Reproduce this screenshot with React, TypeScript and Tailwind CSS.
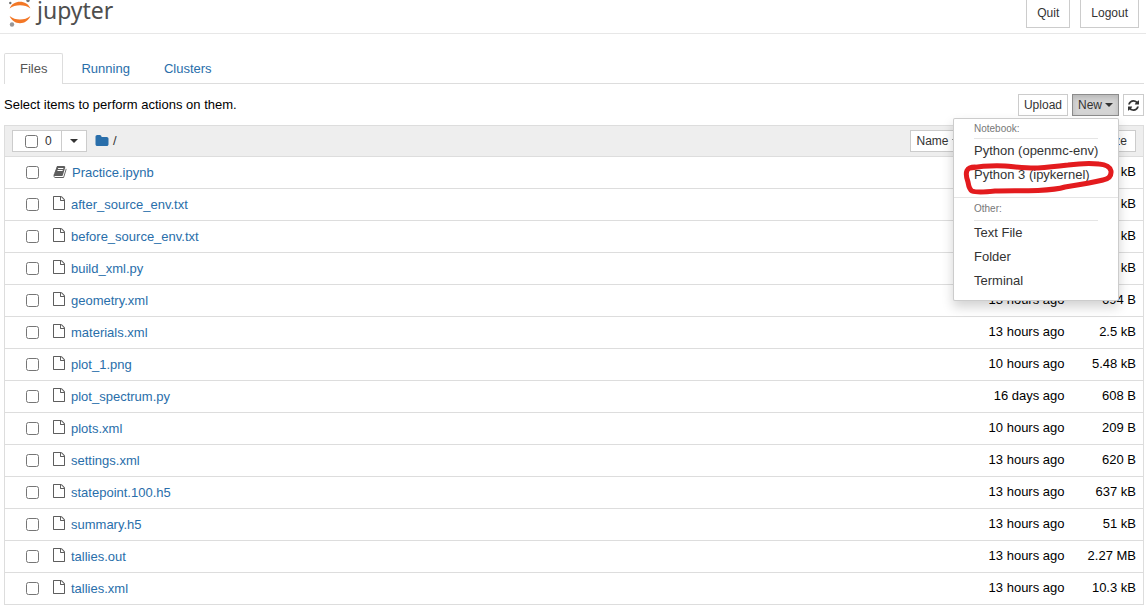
import React from "react";

type Entry = { name: string; modified: string; size: string; notebook?: boolean };

const entries: Entry[] = [
  { name: "Practice.ipynb", modified: "13 hours ago", size: "1.2 kB", notebook: true },
  { name: "after_source_env.txt", modified: "13 hours ago", size: "3.1 kB" },
  { name: "before_source_env.txt", modified: "13 hours ago", size: "3.1 kB" },
  { name: "build_xml.py", modified: "13 hours ago", size: "5.2 kB" },
  { name: "geometry.xml", modified: "13 hours ago", size: "694 B" },
  { name: "materials.xml", modified: "13 hours ago", size: "2.5 kB" },
  { name: "plot_1.png", modified: "10 hours ago", size: "5.48 kB" },
  { name: "plot_spectrum.py", modified: "16 days ago", size: "608 B" },
  { name: "plots.xml", modified: "10 hours ago", size: "209 B" },
  { name: "settings.xml", modified: "13 hours ago", size: "620 B" },
  { name: "statepoint.100.h5", modified: "13 hours ago", size: "637 kB" },
  { name: "summary.h5", modified: "13 hours ago", size: "51 kB" },
  { name: "tallies.out", modified: "13 hours ago", size: "2.27 MB" },
  { name: "tallies.xml", modified: "13 hours ago", size: "10.3 kB" },
];

const BOOK =
  "M1703 478q40 57 18 129l-275 906q-19 64-76.5 107.5t-122.5 43.5h-923q-77 0-148.5-53.5t-99.5-131.5q-24-67-2-127 0-4 3-27t4-37q1-8-3-21.5t-3-19.5q2-11 8-21t16.5-23.5 16.5-23.5q23-38 45-91.5t30-91.5q3-10 .5-30t-.5-28q3-11 17-28t17-23q21-36 42-92t25-90q1-9-2.5-32t.5-28q4-13 22-30.5t22-22.5q19-26 42.5-84.5t27.5-96.5q1-8-3-25.5t-2-26.5q2-8 9-18t18-23 17-21q8-12 16.5-30.5t15-35 16-36 19.5-32 26.5-23.5 36-11.5 47.5 5.5l-1 3q38-9 51-9h761q74 0 114 56t18 130l-274 906q-36 119-71.5 153.5t-128.5 34.5h-869q-27 0-38 15-11 16-1 43 24 70 144 70h923q29 0 56-15.5t35-41.5l300-987q7-22 5-57 38 15 59 43zm-1064 2q-4 13 2 22.5t20 9.5h608q13 0 25.5-9.5t16.5-22.5l21-64q4-13-2-22.5t-20-9.5h-608q-13 0-25.5 9.5t-16.5 22.5zm-83 256q-4 13 2 22.5t20 9.5h608q13 0 25.5-9.5t16.5-22.5l21-64q4-13-2-22.5t-20-9.5h-608q-13 0-25.5 9.5t-16.5 22.5z";
const FILE =
  "M1596 380q28 28 48 76t20 88v1152q0 40-28 68t-68 28h-1344q-40 0-68-28t-28-68v-1600q0-40 28-68t68-28h896q40 0 88 20t76 48zm-444-244v376h376q-10-29-22-41l-313-313q-12-12-41-22zm384 1528v-1024h-416q-40 0-68-28t-28-68v-416h-768v1536h1280z";
const FOLDER =
  "M1728 608v704q0 92-66 158t-158 66h-1216q-92 0-158-66t-66-158v-960q0-92 66-158t158-66h320q92 0 158 66t66 158v32h672q92 0 158 66t66 158z";
const REFRESH =
  "M1511 928q0 5-1 7-64 268-268 434.5t-478 166.5q-146 0-282.5-55t-243.5-157l-129 129q-19 19-45 19t-45-19-19-45v-448q0-26 19-45t45-19h448q26 0 45 19t19 45-19 45l-137 137q71 66 161 102t187 36q134 0 250-65t186-179q11-17 53-117 8-23 30-23h192q13 0 22.5 9.5t9.5 22.5zm25-800v448q0 26-19 45t-45 19h-448q-26 0-45-19t-19-45 19-45l138-138q-148-137-349-137-134 0-250 65t-186 179q-11 17-53 117-8 23-30 23h-199q-13 0-22.5-9.5t-9.5-22.5v-7q65-268 270-434.5t480-166.5q146 0 284 55.5t245 156.5l130-129q19-19 45-19t45 19 19 45z";

function Caret() {
  return <span className="inline-block border-x-4 border-t-4 border-x-transparent border-t-[#333]" />;
}

function Logo() {
  return (
    <a href="#" className="flex h-8 items-start text-[#4e4e4e]">
      <svg width="30" height="28" viewBox="0 0 30 28" aria-hidden="true">
        <path d="M5.600 8.500C7.500 3.800 11.500 1.700 16 1.700S24.500 3.800 26.400 8.500C23.500 6.200 20 5.200 16 5.200S8.500 6.200 5.600 8.500z" fill="#f37726" />
        <path d="M5.600 16C7.500 20.700 11.500 23.200 16 23.200S24.500 20.700 26.400 16C23.500 18.400 20 19.500 16 19.500S8.500 18.400 5.600 16z" fill="#f37726" />
        <circle cx="8" cy="24.500" r="2.200" fill="#989798" />
        <circle cx="6.300" cy="3" r="1.200" fill="#6f7070" />
        <circle cx="24" cy="0.500" r="1.700" fill="#767677" />
      </svg>
      <span className="-mt-2 pl-[3px] font-['Noto_Sans','Open_Sans',sans-serif] text-[23px] leading-9">jupyter</span>
    </a>
  );
}

const tool = "flex h-[22px] items-center border border-[#ccc] bg-white text-xs text-[#333]";

function MenuHeading({ children }: { children: React.ReactNode }) {
  return <div className="mx-5 border-b border-[#e5e5e5] text-[10px] text-[#777]">{children}</div>;
}

function MenuItem({ children }: { children: React.ReactNode }) {
  return (
    <a href="#" role="menuitem" className="flex h-6 items-center px-5 whitespace-nowrap text-[#333]">
      {children}
    </a>
  );
}

function NewMenu() {
  return (
    <div
      role="menu"
      className="absolute top-full right-0 z-10 mt-[2px] w-[166px] rounded-xs border border-black/20 bg-white pb-[7px] shadow-[0_6px_12px_rgba(0,0,0,0.18)]"
    >
      <MenuHeading>
        <div className="flex h-[19px] items-center">Notebook:</div>
      </MenuHeading>
      <MenuItem>Python (openmc-env)</MenuItem>
      <div className="relative">
        <MenuItem>Python 3 (ipykernel)</MenuItem>
        <svg className="absolute -top-2 left-2" width="154" height="42" viewBox="0 0 154 42" fill="none" aria-hidden="true">
          <path
            d="M8 13C20 11 32 10.500 43 11C55 12 66 13.500 76 13C88 12 97 11 106 10C117 8.500 129 8 137 9C144 9.500 148 12 149 16C149.500 21 147 24 141 25C129 28 116 30 103 32C95 34.500 86 35 76 35.500C60 36 45 35.500 33 36C24 37 14 37.500 10 36C7 34 6.500 30 6 27C4.500 23 3.500 19 5 15.500C6 13.500 9 12 13 12"
            stroke="#e31b1e"
            strokeWidth="5"
            strokeLinecap="round"
            strokeLinejoin="round"
          />
        </svg>
      </div>
      <hr className="mt-[10px] border-[#e5e5e5]" />
      <MenuHeading>
        <div className="flex h-[22px] items-center">Other:</div>
      </MenuHeading>
      <MenuItem>Text File</MenuItem>
      <MenuItem>Folder</MenuItem>
      <MenuItem>Terminal</MenuItem>
    </div>
  );
}

export default function App() {
  return (
    <div className="min-h-screen bg-white font-['Liberation_Sans',Arial,sans-serif] text-[13px] leading-5 text-black">
      <header className="flex h-[34px] items-start justify-between overflow-hidden border-b border-[#e7e7e7] pr-[7px] pl-1">
        <Logo />
        <div className="flex gap-[10px]">
          <button className="h-7 border border-t-0 border-[#ccc] px-[10px] pb-[2px] text-xs text-[#333]">Quit</button>
          <button className="h-7 border border-t-0 border-[#ccc] px-[10px] pb-[2px] text-xs text-[#333]">Logout</button>
        </div>
      </header>

      <main className="pt-[19px] pr-[2px] pl-1">
        <nav className="flex h-[31px] border-b border-[#ddd]">
          <a href="#" className="-mb-px flex items-center rounded-t-xs border border-b-0 border-[#ddd] bg-white px-[15px] text-[#555]">
            Files
          </a>
          <a href="#" className="ml-[2px] flex items-center px-4 pt-px text-[#296eaa]">Running</a>
          <a href="#" className="ml-[2px] flex items-center px-4 pt-px text-[#296eaa]">Clusters</a>
        </nav>

        <div className="flex items-center justify-between pt-[10px] pb-[9px]">
          <span>Select items to perform actions on them.</span>
          <div className="flex gap-1">
            <button className={tool + " px-[5px]"}>Upload</button>
            <div className="relative">
              <button className="flex h-[22px] items-center gap-[3px] border border-[#8c8c8c] bg-[#d4d4d4] px-[5px] text-xs text-[#333] shadow-[inset_0_3px_5px_rgba(0,0,0,0.125)]">
                New <Caret />
              </button>
              <NewMenu />
            </div>
            <button className={tool + " px-1"} aria-label="Refresh">
              <svg width="11" height="11" viewBox="0 0 1536 1536" fill="#333"><path d={REFRESH} /></svg>
            </button>
          </div>
        </div>

        <table className="w-full border-collapse border border-[#ddd]">
          <thead>
            <tr className="h-[31px] bg-[#eee] font-normal">
              <th className="py-0 pl-[7px] font-normal">
                <div className="flex items-center justify-between">
                  <div className="flex items-center">
                    <label className={tool + " w-[50px] gap-[7px] pl-3"}>
                      <input type="checkbox" className="size-[13px]" />0
                    </label>
                    <button className={tool + " -ml-px w-[26px] justify-center"} aria-label="Select by type">
                      <Caret />
                    </button>
                    <a href="#" className="ml-2 flex items-center gap-1 text-[#333]">
                      <svg width="14" height="14" viewBox="0 0 1792 1792" fill="#296eaa" aria-hidden="true"><path d={FOLDER} /></svg>
                      /
                    </a>
                  </div>
                  <button className={tool + " gap-[3px] px-[5px]"}>
                    Name <Caret />
                  </button>
                </div>
              </th>
              <th className="w-[99px] p-0 font-normal">
                <button className={tool + " ml-auto px-[5px] whitespace-nowrap"}>Last Modified</button>
              </th>
              <th className="w-[79px] py-0 pr-[7px] font-normal">
                <button className={tool + " ml-auto px-[8px] whitespace-nowrap"}>File size</button>
              </th>
            </tr>
          </thead>
          <tbody>
            {entries.map((e) => (
              <tr key={e.name} className="h-8 border-t border-[#ddd]">
                <td className="py-0 pl-[21px]">
                  <div className="flex items-center">
                    <input type="checkbox" aria-label={e.name} className="size-[13px]" />
                    <svg
                      className={e.notebook ? "mb-[2px] ml-[14px]" : "mb-1 ml-[13px]"}
                      width="14"
                      height="14"
                      viewBox="0 0 1792 1792"
                      fill="#5e5e5e"
                      aria-hidden="true"
                    >
                      <path d={e.notebook ? BOOK : FILE} />
                    </svg>
                    <a href="#" className="ml-[5px] text-[#296eaa]">{e.name}</a>
                  </div>
                </td>
                <td className="px-0 pt-0 pb-[2px] text-right whitespace-nowrap">{e.modified}</td>
                <td className="pt-0 pr-[7px] pb-[2px] text-right whitespace-nowrap">{e.size}</td>
              </tr>
            ))}
          </tbody>
        </table>
      </main>
    </div>
  );
}
